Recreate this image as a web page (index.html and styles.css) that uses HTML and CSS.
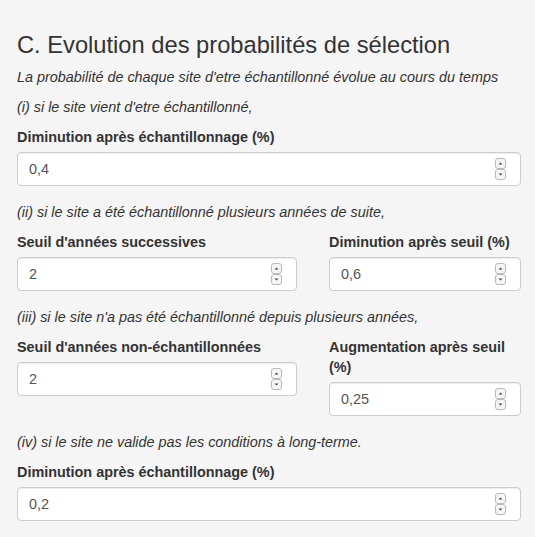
FILE: index.html
```html
<!DOCTYPE html>
<html lang="fr">
<head>
<meta charset="utf-8">
<title>Evolution des probabilités</title>
<link rel="stylesheet" href="styles.css">
</head>
<body>
<div class="panel">
  <h3 class="title">C. Evolution des probabilités de sélection</h3>
  <p class="note">La probabilité de chaque site d'etre échantillonné évolue au cours du temps</p>
  <p class="note">(i) si le site vient d'etre échantillonné,</p>
  <div class="form-group">
    <label class="label">Diminution après échantillonnage (%)</label>
    <div class="num"><input class="num-input" type="text" value="0,4"><svg class="spin" viewBox="0 0 11 22" width="11" height="22"><rect x="0.5" y="0.5" width="10" height="10" rx="2.5" fill="#f6f6f6" stroke="#b8b8b8"/><rect x="0.5" y="11.5" width="10" height="10" rx="2.5" fill="#f6f6f6" stroke="#b8b8b8"/><path d="M3.5 6.5h4l-2-2z" fill="#444"/><path d="M3.5 15.5h4l-2 2z" fill="#444"/></svg></div>
  </div>
  <p class="note">(ii) si le site a été échantillonné plusieurs années de suite,</p>
  <div class="row">
    <div class="form-group">
      <label class="label">Seuil d'années successives</label>
      <div class="num"><input class="num-input" type="text" value="2"><svg class="spin" viewBox="0 0 11 22" width="11" height="22"><rect x="0.5" y="0.5" width="10" height="10" rx="2.5" fill="#f6f6f6" stroke="#b8b8b8"/><rect x="0.5" y="11.5" width="10" height="10" rx="2.5" fill="#f6f6f6" stroke="#b8b8b8"/><path d="M3.5 6.5h4l-2-2z" fill="#444"/><path d="M3.5 15.5h4l-2 2z" fill="#444"/></svg></div>
    </div>
    <div class="form-group">
      <label class="label">Diminution après seuil (%)</label>
      <div class="num"><input class="num-input" type="text" value="0,6"><svg class="spin" viewBox="0 0 11 22" width="11" height="22"><rect x="0.5" y="0.5" width="10" height="10" rx="2.5" fill="#f6f6f6" stroke="#b8b8b8"/><rect x="0.5" y="11.5" width="10" height="10" rx="2.5" fill="#f6f6f6" stroke="#b8b8b8"/><path d="M3.5 6.5h4l-2-2z" fill="#444"/><path d="M3.5 15.5h4l-2 2z" fill="#444"/></svg></div>
    </div>
  </div>
  <p class="note">(iii) si le site n'a pas été échantillonné depuis plusieurs années,</p>
  <div class="row">
    <div class="form-group">
      <label class="label">Seuil d'années non-échantillonnées</label>
      <div class="num"><input class="num-input" type="text" value="2"><svg class="spin" viewBox="0 0 11 22" width="11" height="22"><rect x="0.5" y="0.5" width="10" height="10" rx="2.5" fill="#f6f6f6" stroke="#b8b8b8"/><rect x="0.5" y="11.5" width="10" height="10" rx="2.5" fill="#f6f6f6" stroke="#b8b8b8"/><path d="M3.5 6.5h4l-2-2z" fill="#444"/><path d="M3.5 15.5h4l-2 2z" fill="#444"/></svg></div>
    </div>
    <div class="form-group">
      <label class="label">Augmentation après seuil (%)</label>
      <div class="num"><input class="num-input" type="text" value="0,25"><svg class="spin" viewBox="0 0 11 22" width="11" height="22"><rect x="0.5" y="0.5" width="10" height="10" rx="2.5" fill="#f6f6f6" stroke="#b8b8b8"/><rect x="0.5" y="11.5" width="10" height="10" rx="2.5" fill="#f6f6f6" stroke="#b8b8b8"/><path d="M3.5 6.5h4l-2-2z" fill="#444"/><path d="M3.5 15.5h4l-2 2z" fill="#444"/></svg></div>
    </div>
  </div>
  <p class="note">(iv) si le site ne valide pas les conditions à long-terme.</p>
  <div class="form-group">
    <label class="label">Diminution après échantillonnage (%)</label>
    <div class="num"><input class="num-input" type="text" value="0,2"><svg class="spin" viewBox="0 0 11 22" width="11" height="22"><rect x="0.5" y="0.5" width="10" height="10" rx="2.5" fill="#f6f6f6" stroke="#b8b8b8"/><rect x="0.5" y="11.5" width="10" height="10" rx="2.5" fill="#f6f6f6" stroke="#b8b8b8"/><path d="M3.5 6.5h4l-2-2z" fill="#444"/><path d="M3.5 15.5h4l-2 2z" fill="#444"/></svg></div>
  </div>
</div>
</body>
</html>
```

FILE: styles.css
```css
html, body {
  margin: 0;
  padding: 0;
  background: #f5f5f5;
}
body {
  font-family: "Liberation Sans", Arial, Helvetica, sans-serif;
  font-size: 14.4px;
  line-height: 20px;
  color: #333;
}
.panel {
  padding: 12px 14px 0 17px;
}
.title {
  font-size: 23.7px;
  font-weight: 500;
  line-height: 26.4px;
  margin: 20px 0 9px;
}
.note {
  font-style: italic;
  margin: 0 0 10px;
}
.form-group {
  margin-bottom: 16px;
  min-width: 0;
}
.label {
  display: block;
  font-weight: bold;
  margin-bottom: 5px;
}
.row {
  display: grid;
  grid-template-columns: 280px minmax(0, 1fr);
  column-gap: 32px;
  align-items: start;
}
.num {
  display: flex;
  align-items: center;
  box-sizing: border-box;
  height: 34px;
  padding: 0 14px 0 11px;
  background: #fff;
  border: 1px solid #ccc;
  border-radius: 4px;
  box-shadow: inset 0 1px 1px rgba(0, 0, 0, 0.075);
}
.num-input {
  flex: 1;
  width: 0;
  min-width: 0;
  border: 0;
  padding: 0;
  margin: 0;
  background: transparent;
  font-family: inherit;
  font-size: 14.4px;
  color: #555;
  outline: none;
}
.spin {
  flex: none;
  display: block;
}
```
